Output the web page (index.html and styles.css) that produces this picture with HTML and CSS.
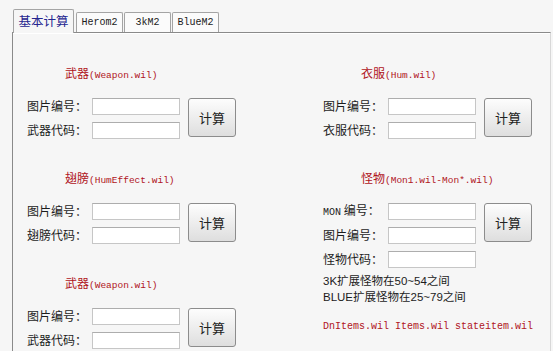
FILE: index.html
```html
<!DOCTYPE html>
<html lang="zh-CN">
<head>
    <meta charset="UTF-8">
    <title>基本计算</title>
    <link rel="stylesheet" href="styles.css">
</head>
<body>
    <div class="tabs">
        <div class="tab active">基本计算</div>
        <div class="tab mono">Herom2</div>
        <div class="tab mono">3kM2</div>
        <div class="tab mono">BlueM2</div>
    </div>
    <div class="panel">
        <div class="col">
            <div class="sect">
                <div class="title">武器<span class="en">(Weapon.wil)</span></div>
                <div class="form">
                    <label>图片编号：</label><input type="text"><button>计算</button>
                    <label>武器代码：</label><input type="text">
                </div>
            </div>
            <div class="sect">
                <div class="title">翅膀<span class="en">(HumEffect.wil)</span></div>
                <div class="form">
                    <label>图片编号：</label><input type="text"><button>计算</button>
                    <label>翅膀代码：</label><input type="text">
                </div>
            </div>
            <div class="sect last">
                <div class="title">武器<span class="en">(Weapon.wil)</span></div>
                <div class="form">
                    <label>图片编号：</label><input type="text"><button>计算</button>
                    <label>武器代码：</label><input type="text">
                </div>
            </div>
        </div>
        <div class="col">
            <div class="sect">
                <div class="title">衣服<span class="en">(Hum.wil)</span></div>
                <div class="form">
                    <label>图片编号：</label><input type="text"><button>计算</button>
                    <label>衣服代码：</label><input type="text">
                </div>
            </div>
            <div class="sect last">
                <div class="title">怪物<span class="en">(Mon1.wil-Mon*.wil)</span></div>
                <div class="form">
                    <label><span class="en">MON</span> 编号：</label><input type="text"><button>计算</button>
                    <label>图片编号：</label><input type="text">
                    <label>怪物代码：</label><input type="text">
                </div>
                <div class="notes">
                    <div>3K扩展怪物在50~54之间</div>
                    <div>BLUE扩展怪物在25~79之间</div>
                </div>
                <div class="files">DnItems.wil Items.wil stateitem.wil</div>
            </div>
        </div>
    </div>
</body>
</html>
```

FILE: styles.css
```css
body {
    margin: 0;
    background-color: #f6f6f6;
    font-family: "Noto Sans CJK SC", sans-serif;
    font-size: 12px;
    color: #1c1c1c;
    height: 351px;
    overflow: hidden;
}
.tabs {
    display: flex;
    align-items: flex-end;
    height: 32px;
    margin-left: 13px;
    gap: 1px;
}
.tab {
    box-sizing: border-box;
    height: 20px;
    width: 47px;
    border: 1px solid #a4a4a4;
    border-bottom: none;
    border-radius: 2px 2px 0 0;
    background-color: #fbfbfb;
    text-align: center;
    line-height: 19px;
}
.tab.active {
    position: relative;
    z-index: 1;
    width: 61px;
    height: 24px;
    margin-bottom: -1px;
    margin-right: 1px;
    background-color: #f6f6f6;
    color: #25258f;
    font-size: 12.5px;
    line-height: 21px;
}
.mono, .en {
    font-family: "Liberation Mono", monospace;
    font-size: 10px;
}
.panel {
    box-sizing: border-box;
    height: 319px;
    overflow: hidden;
    margin: 0 2px 0 12px;
    padding: 32px 0 0 14px;
    border: 1px solid #8a8a8a;
    border-bottom: none;
    border-right-color: #d8d8d8;
    box-shadow: inset 0 1px 0 #ffffff;
    display: grid;
    grid-template-columns: 296px 1fr;
}
.sect {
    margin-bottom: 31px;
}
.sect.last {
    margin-bottom: 0;
}
.title {
    height: 16px;
    line-height: 16px;
    padding-left: 38px;
    margin-bottom: 16px;
    color: #b0141c;
}
.title .en {
    font-size: 9.5px;
}
.form {
    display: grid;
    grid-template-columns: 65px 88px auto;
    grid-auto-rows: 18px;
    row-gap: 6px;
    align-items: center;
}
.form label {
    line-height: 18px;
}
.form input {
    box-sizing: border-box;
    width: 88px;
    height: 17px;
    margin: 0;
    border: 1px solid #c6c6c6;
    border-top-color: #adadad;
    background-color: #fff;
}
.form button {
    grid-column: 3;
    grid-row: 1 / span 2;
    align-self: start;
    width: 48px;
    height: 39px;
    margin: 1px 0 0 8px;
    border: 1px solid #8c8c8c;
    border-radius: 3px;
    background: linear-gradient(#fdfdfd, #dedede);
    font-family: "Noto Sans CJK SC", sans-serif;
    font-size: 13px;
    color: #222;
    padding: 0;
}
.notes {
    margin-top: 5px;
    line-height: 16px;
    font-family: "Liberation Sans", "Noto Sans CJK SC", sans-serif;
    font-size: 11.5px;
}
.files {
    margin-top: 14px;
    font-family: "Liberation Mono", monospace;
    font-size: 10px;
    line-height: 16px;
    color: #b0141c;
}
```
